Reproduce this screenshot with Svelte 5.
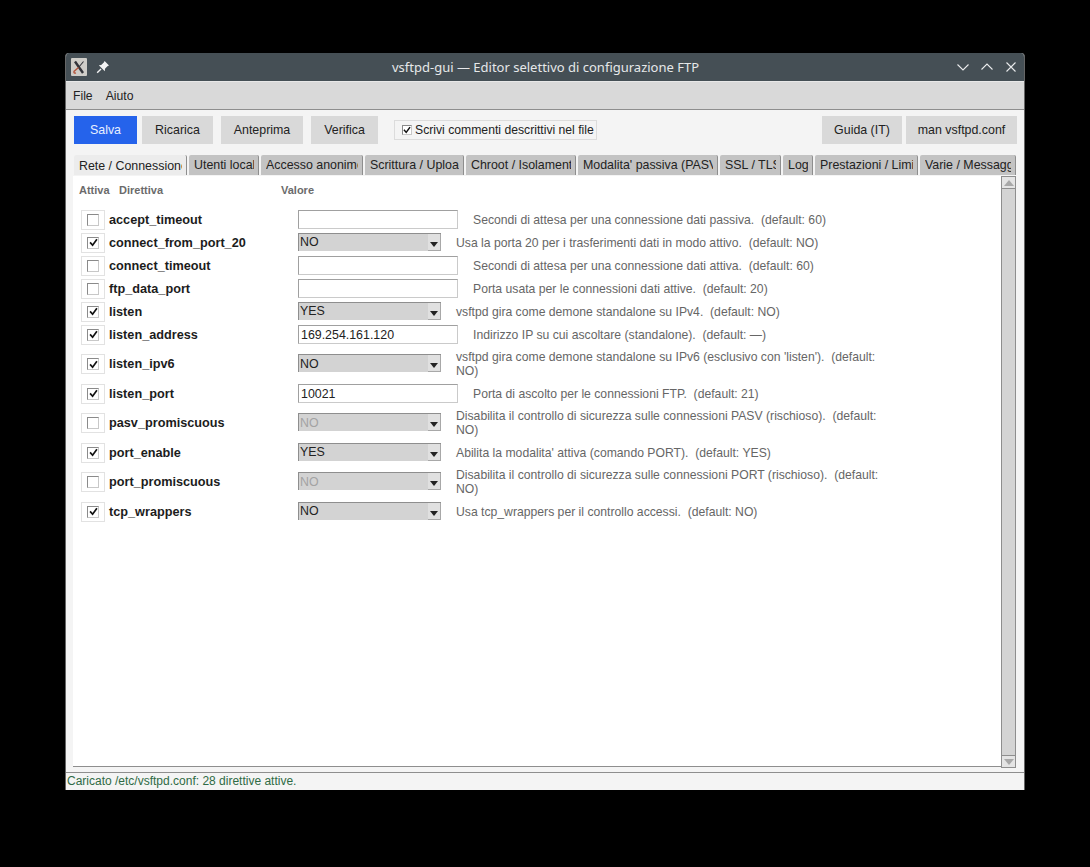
<script>
  const tabs = [
    { label: "Rete / Connessione", w: 113, active: true },
    { label: "Utenti locali", w: 70 },
    { label: "Accesso anonimo", w: 102 },
    { label: "Scrittura / Upload", w: 99 },
    { label: "Chroot / Isolamento", w: 110 },
    { label: "Modalita' passiva (PASV)", w: 140 },
    { label: "SSL / TLS", w: 61 },
    { label: "Log", w: 30 },
    { label: "Prestazioni / Limiti", w: 103 },
    { label: "Varie / Messaggi", w: 96 },
  ];

  const rows = [
    { name: "accept_timeout", on: false, kind: "entry", value: "", help: "Secondi di attesa per una connessione dati passiva.  (default: 60)" },
    { name: "connect_from_port_20", on: true, kind: "combo", value: "NO", help: "Usa la porta 20 per i trasferimenti dati in modo attivo.  (default: NO)" },
    { name: "connect_timeout", on: false, kind: "entry", value: "", help: "Secondi di attesa per una connessione dati attiva.  (default: 60)" },
    { name: "ftp_data_port", on: false, kind: "entry", value: "", help: "Porta usata per le connessioni dati attive.  (default: 20)" },
    { name: "listen", on: true, kind: "combo", value: "YES", help: "vsftpd gira come demone standalone su IPv4.  (default: NO)" },
    { name: "listen_address", on: true, kind: "entry", value: "169.254.161.120", help: "Indirizzo IP su cui ascoltare (standalone).  (default: —)" },
    { name: "listen_ipv6", on: true, kind: "combo", value: "NO", tall: true, help: "vsftpd gira come demone standalone su IPv6 (esclusivo con 'listen').  (default: NO)" },
    { name: "listen_port", on: true, kind: "entry", value: "10021", help: "Porta di ascolto per le connessioni FTP.  (default: 21)" },
    { name: "pasv_promiscuous", on: false, kind: "combo", value: "NO", tall: true, help: "Disabilita il controllo di sicurezza sulle connessioni PASV (rischioso).  (default: NO)" },
    { name: "port_enable", on: true, kind: "combo", value: "YES", help: "Abilita la modalita' attiva (comando PORT).  (default: YES)" },
    { name: "port_promiscuous", on: false, kind: "combo", value: "NO", tall: true, help: "Disabilita il controllo di sicurezza sulle connessioni PORT (rischioso).  (default: NO)" },
    { name: "tcp_wrappers", on: true, kind: "combo", value: "NO", help: "Usa tcp_wrappers per il controllo accessi.  (default: NO)" },
  ];
</script>

<div class="window">
  <header class="titlebar">
    <div class="tb-left">
      <svg class="appicon" width="16" height="18" viewBox="0 0 16 18">
        <rect width="16" height="18" rx="1" fill="#cfcdc8" />
        <path d="M4 3.5 L12 15" stroke="#33343a" stroke-width="2.4" fill="none" />
        <path d="M12.5 3.5 L7.5 9.5" stroke="#33343a" stroke-width="1.1" fill="none" />
        <path d="M7.5 9.5 L3 13.5 Q2.5 15.5 5 15" stroke="#b5583f" stroke-width="1.4" fill="none" />
      </svg>
      <svg class="pin" width="14" height="14" viewBox="0 0 14 14">
        <path d="M8.6 1 L13 5.4 L11.4 6.2 L9 8.8 L8.8 11.2 L2.8 5.2 L5.2 5 L7.8 2.6 Z" fill="#f4f4f4" />
        <path d="M5 9 L1.2 12.8" stroke="#f4f4f4" stroke-width="1.4" />
      </svg>
    </div>
    <div class="title">vsftpd-gui — Editor selettivo di configurazione FTP</div>
    <div class="tb-right">
      <svg width="14" height="14" viewBox="0 0 14 14"><path d="M1.5 4.5 L7 10 L12.5 4.5" /></svg>
      <svg width="14" height="14" viewBox="0 0 14 14"><path d="M1.5 9.5 L7 4 L12.5 9.5" /></svg>
      <svg width="14" height="14" viewBox="0 0 14 14"><path d="M2.5 2.5 L11.5 11.5 M11.5 2.5 L2.5 11.5" /></svg>
    </div>
  </header>

  <nav class="menubar">
    <span>File</span>
    <span>Aiuto</span>
  </nav>

  <div class="toolbar">
    <button class="btn primary w63">Salva</button>
    <button class="btn w71">Ricarica</button>
    <button class="btn w82">Anteprima</button>
    <button class="btn w67">Verifica</button>
    <label class="comment-toggle">
      <span class="box small">
        <svg width="8" height="8" viewBox="0 0 10 10"><path d="M1.2 4.8 L4 8 L8.8 1.4" /></svg>
      </span>
      Scrivi commenti descrittivi nel file
    </label>
    <div class="spacer"></div>
    <button class="btn w80">Guida (IT)</button>
    <button class="btn w111">man vsftpd.conf</button>
  </div>

  <div class="tabs">
    {#each tabs as tab}
      <div class="tab" class:active={tab.active} style="width: {tab.w}px">
        <span>{tab.label}</span>
      </div>
    {/each}
  </div>

  <main class="panel">
    <div class="content">
      <div class="heads">
        <span class="h-attiva">Attiva</span>
        <span class="h-direttiva">Direttiva</span>
        <span>Valore</span>
      </div>
      <div class="rows">
        {#each rows as row}
          <div class="row" class:tall={row.tall}>
            <div class="check">
              <span class="box">
                {#if row.on}
                  <svg width="9" height="9" viewBox="0 0 10 10"><path d="M1.2 4.8 L4 8 L8.8 1.4" /></svg>
                {/if}
              </span>
            </div>
            <div class="name">{row.name}</div>
            {#if row.kind === "entry"}
              <input class="entry" type="text" value={row.value} />
            {:else}
              <div class="combo" class:disabled={!row.on}>
                <span class="combo-value">{row.value}</span>
                <span class="combo-arrow">
                  <svg width="8" height="5" viewBox="0 0 8 5"><path d="M0 0 H8 L4 5 Z" fill="#222" /></svg>
                </span>
              </div>
            {/if}
            <div class="help">{row.help}</div>
          </div>
        {/each}
      </div>
    </div>
    <div class="scrollbar">
      <div class="arrow up"><svg width="10" height="6" viewBox="0 0 10 6"><path d="M5 0 L10 6 H0 Z" fill="#a8a8a8" /></svg></div>
      <div class="thumb"></div>
      <div class="arrow down"><svg width="10" height="6" viewBox="0 0 10 6"><path d="M0 0 H10 L5 6 Z" fill="#a8a8a8" /></svg></div>
    </div>
  </main>

  <footer class="status">Caricato /etc/vsftpd.conf: 28 direttive attive.</footer>
</div>

<style>
  :global(body) {
    background: #000;
    font-family: "Liberation Sans", Arial, sans-serif;
  }

  .window {
    box-sizing: border-box;
    width: 960px;
    height: 737px;
    margin: 53px 0 0 65px;
    display: flex;
    flex-direction: column;
    background: #f4f4f4;
    border: 1px solid #666;
    border-width: 0 1px;
    border-radius: 4px 4px 0 0;
    overflow: hidden;
    font-size: 12.2px;
    color: #222;
  }

  .titlebar {
    height: 29px;
    flex: none;
    box-sizing: border-box;
    display: flex;
    align-items: center;
    background: #454f55;
    position: relative;
    border-bottom: 1px solid #e8e8e8;
  }

  .tb-left {
    display: flex;
    align-items: center;
    gap: 9px;
    padding-left: 5px;
  }

  .title {
    position: absolute;
    left: 326px;
    font-family: "Noto Sans", sans-serif;
    font-size: 13px;
    color: #e6e8e9;
    white-space: nowrap;
  }

  .tb-right {
    margin-left: auto;
    display: flex;
    gap: 10px;
    padding-right: 6px;
  }

  .tb-right path {
    fill: none;
    stroke: #e8eaeb;
    stroke-width: 1.1;
  }

  .menubar {
    height: 28px;
    flex: none;
    box-sizing: border-box;
    display: flex;
    align-items: center;
    gap: 13px;
    padding-left: 7px;
    background: #d9d9d9;
    border-bottom: 1px solid #8e8e8e;
  }

  .toolbar {
    flex: none;
    height: 45px;
    box-sizing: border-box;
    display: flex;
    align-items: flex-start;
    padding: 6px 7px 0 8px;
    gap: 5px;
  }

  .btn {
    height: 28px;
    padding: 0;
    border: none;
    background: #d9d9d9;
    color: #222;
    font: inherit;
    font-size: 12.4px;
  }

  .btn.primary {
    background: #2563eb;
    color: #e8efff;
  }

  .w63 { width: 63px; }
  .w71 { width: 71px; margin-right: 3px; }
  .w82 { width: 82px; margin-right: 3px; }
  .w67 { width: 67px; }
  .w80 { width: 80px; margin-right: -1px; }
  .w111 { width: 111px; }

  .comment-toggle {
    box-sizing: border-box;
    width: 203px;
    height: 20px;
    margin: 4px 0 0 11px;
    display: flex;
    align-items: center;
    gap: 3px;
    padding-left: 7px;
    border: 1px solid #dcdcdc;
    white-space: nowrap;
    color: #222;
  }

  .spacer {
    flex: 1;
  }

  .box {
    box-sizing: border-box;
    width: 12px;
    height: 12px;
    display: flex;
    align-items: center;
    justify-content: center;
    background: #fff;
    border: 1px solid #c8c8c8;
    border-top-color: #8a8a8a;
    border-left-color: #8a8a8a;
  }

  .box.small {
    width: 10px;
    height: 10px;
  }

  .box svg {
    flex: none;
  }

  .box path {
    fill: none;
    stroke: #111;
    stroke-width: 1.9;
  }

  .tabs {
    flex: none;
    height: 20px;
    display: flex;
    gap: 2px;
    padding-left: 8px;
  }

  .tab {
    box-sizing: border-box;
    height: 20px;
    padding: 0 4px 0 5px;
    display: flex;
    align-items: center;
    background: #c3c3c3;
    border-right: 1px solid #8e8e8e;
    border-radius: 2px 2px 0 0;
    overflow: hidden;
    white-space: nowrap;
    font-size: 12.4px;
    color: #222;
  }

  .tab span {
    display: block;
    overflow: hidden;
    flex: 1;
  }

  .tab.active {
    background: #ececec;
    height: 21px;
  }

  .panel {
    flex: 1;
    min-height: 0;
    display: flex;
    background: #f4f4f4;
    padding: 1px 8px 5px 7px;
  }

  .content {
    flex: 1;
    background: #fff;
    border-bottom: 1px solid #8e8e8e;
    display: flex;
    flex-direction: column;
    min-width: 0;
  }

  .heads {
    height: 25px;
    flex: none;
    display: flex;
    align-items: center;
    padding: 2px 0 0 6px;
    box-sizing: border-box;
    font-size: 11px;
    font-weight: bold;
    color: #6b6b6b;
  }

  .h-attiva { width: 40px; }
  .h-direttiva { width: 162px; }

  .rows {
    padding: 7px 0 0 8px;
    display: flex;
    flex-direction: column;
  }

  .row {
    height: 23px;
    display: flex;
    align-items: center;
  }

  .row.tall {
    height: 36px;
  }

  .check {
    box-sizing: border-box;
    width: 24px;
    height: 20px;
    flex: none;
    display: flex;
    align-items: center;
    justify-content: center;
    border: 1px solid #e2e2e2;
  }

  .name {
    width: 193px;
    flex: none;
    padding-left: 4px;
    box-sizing: border-box;
    font-size: 12.7px;
    font-weight: bold;
    color: #1c1c1c;
  }

  .entry {
    box-sizing: border-box;
    width: 160px;
    height: 19px;
    flex: none;
    margin: 0 15px 0 0;
    padding: 0 2px;
    border: 1px solid #cacaca;
    border-top-color: #a0a0a0;
    border-left-color: #a0a0a0;
    background: #fff;
    font: inherit;
    font-size: 12.4px;
    color: #222;
    outline: none;
  }

  .combo {
    box-sizing: border-box;
    width: 143px;
    height: 18px;
    flex: none;
    margin: 0 15px 2px 0;
    display: flex;
    align-items: center;
    background: #d3d3d3;
    border-top: 1px solid #8e8e8e;
    border-left: 1px solid #8e8e8e;
    font-size: 12.4px;
    color: #222;
  }

  .combo.disabled {
    color: #a3a3a3;
  }

  .combo-value {
    flex: 1;
    padding-left: 1px;
  }

  .combo-arrow {
    width: 13px;
    height: 100%;
    display: flex;
    align-items: flex-end;
    justify-content: center;
    padding-bottom: 3px;
    box-sizing: border-box;
    background: #e0e0e0;
    border-right: 1px solid #a8a8a8;
    border-bottom: 1px solid #a8a8a8;
  }

  .help {
    width: 430px;
    flex: none;
    font-size: 12.2px;
    line-height: 14px;
    color: #666;
    white-space: pre-wrap;
  }

  .scrollbar {
    box-sizing: border-box;
    width: 15px;
    flex: none;
    display: flex;
    flex-direction: column;
    border: 1px solid #8e8e8e;
    background: #d9d9d9;
    margin-bottom: -1px;
  }

  .arrow {
    height: 11px;
    flex: none;
    display: flex;
    align-items: center;
    justify-content: center;
    background: #e4e4e4;
  }

  .arrow.up { border-bottom: 1px solid #8e8e8e; }
  .arrow.down { border-top: 1px solid #8e8e8e; }

  .thumb {
    flex: 1;
    background: #d4d4d4;
  }

  .status {
    flex: none;
    height: 18px;
    box-sizing: border-box;
    padding: 1px 0 0 1px;
    border-top: 1px solid #8e8e8e;
    background: #f4f4f4;
    color: #2f6b45;
    font-size: 12px;
    line-height: 15px;
  }
</style>
